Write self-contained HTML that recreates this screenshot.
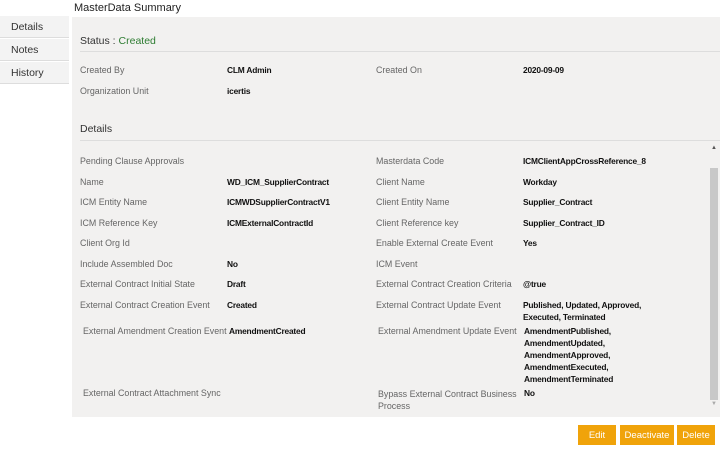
<!DOCTYPE html>
<html><head><style>
body{margin:0;width:720px;height:449px;background:#fff;font-family:"Liberation Sans",sans-serif;position:relative;overflow:hidden}
.a{position:absolute;white-space:nowrap}
.l{font-size:8.9px;color:#666}
.v{font-size:8.4px;color:#111;font-weight:bold;letter-spacing:-0.2px;line-height:12px}
.nav{position:absolute;left:0;width:69px;height:22px;background:#f3f3f3;border-bottom:1px solid #ddd;font-size:10.5px;color:#333;line-height:22px;padding-left:11px;box-sizing:border-box}
.btn{position:absolute;top:425px;height:20px;background:#f0a30a;color:#fff;font-size:9.5px;line-height:22px;text-align:center}
</style></head><body>
<div class="a" style="left:74px;top:2px;font-size:11px;color:#222">MasterData Summary</div>
<div class="nav" style="top:16px">Details</div>
<div class="nav" style="top:39px">Notes</div>
<div class="nav" style="top:62px">History</div>
<div style="position:absolute;left:72px;top:17px;width:648px;height:400px;background:#f2f1f0"></div>
<div class="a" style="left:80px;top:35px;font-size:10.5px;color:#333">Status : <span style="color:#2e7d32">Created</span></div>
<div style="position:absolute;left:80px;top:51px;width:640px;height:1px;background:#ddd"></div>
<div class="a" style="left:80px;font-size:10.5px;color:#333;top:123px">Details</div>
<div style="position:absolute;left:80px;top:140px;width:640px;height:1px;background:#ddd"></div>
<div style="position:absolute;left:710px;top:168px;width:8px;height:232px;background:#c8c8c8"></div>
<div class="a" style="left:711px;top:145px;font-size:6px;color:#555">▲</div>
<div class="a" style="left:711px;top:401px;font-size:6px;color:#aaa">▼</div>

<div class="a l" style="left:80px;top:65px">Created By</div><div class="a v" style="left:227px;top:64px">CLM Admin</div>
<div class="a l" style="left:376px;top:65px">Created On</div><div class="a v" style="left:523px;top:64px">2020-09-09</div>
<div class="a l" style="left:80px;top:86px">Organization Unit</div><div class="a v" style="left:227px;top:85px">icertis</div>

<div class="a l" style="left:80px;top:156px">Pending Clause Approvals</div>
<div class="a l" style="left:376px;top:156px">Masterdata Code</div><div class="a v" style="left:523px;top:155px">ICMClientAppCrossReference_8</div>
<div class="a l" style="left:80px;top:177px">Name</div><div class="a v" style="left:227px;top:176px">WD_ICM_SupplierContract</div>
<div class="a l" style="left:376px;top:177px">Client Name</div><div class="a v" style="left:523px;top:176px">Workday</div>
<div class="a l" style="left:80px;top:197px">ICM Entity Name</div><div class="a v" style="left:227px;top:196px">ICMWDSupplierContractV1</div>
<div class="a l" style="left:376px;top:197px">Client Entity Name</div><div class="a v" style="left:523px;top:196px">Supplier_Contract</div>
<div class="a l" style="left:80px;top:218px">ICM Reference Key</div><div class="a v" style="left:227px;top:217px">ICMExternalContractId</div>
<div class="a l" style="left:376px;top:218px">Client Reference key</div><div class="a v" style="left:523px;top:217px">Supplier_Contract_ID</div>
<div class="a l" style="left:80px;top:238px">Client Org Id</div>
<div class="a l" style="left:376px;top:238px">Enable External Create Event</div><div class="a v" style="left:523px;top:237px">Yes</div>
<div class="a l" style="left:80px;top:259px">Include Assembled Doc</div><div class="a v" style="left:227px;top:258px">No</div>
<div class="a l" style="left:376px;top:259px">ICM Event</div>
<div class="a l" style="left:80px;top:279px">External Contract Initial State</div><div class="a v" style="left:227px;top:278px">Draft</div>
<div class="a l" style="left:376px;top:279px">External Contract Creation Criteria</div><div class="a v" style="left:523px;top:278px">@true</div>
<div class="a l" style="left:80px;top:300px">External Contract Creation Event</div><div class="a v" style="left:227px;top:299px">Created</div>
<div class="a l" style="left:376px;top:300px">External Contract Update Event</div><div class="a v" style="left:523px;top:299px">Published, Updated, Approved,<br>Executed, Terminated</div>
<div class="a l" style="left:83px;top:326px">External Amendment Creation Event</div><div class="a v" style="left:229px;top:325px">AmendmentCreated</div>
<div class="a l" style="left:378px;top:326px">External Amendment Update Event</div><div class="a v" style="left:524px;top:325px">AmendmentPublished,<br>AmendmentUpdated,<br>AmendmentApproved,<br>AmendmentExecuted,<br>AmendmentTerminated</div>
<div class="a l" style="left:83px;top:388px">External Contract Attachment Sync</div>
<div class="a l" style="left:378px;top:388px;line-height:12px">Bypass External Contract Business<br>Process</div><div class="a v" style="left:524px;top:387px">No</div>

<div class="btn" style="left:578px;width:38px">Edit</div>
<div class="btn" style="left:620px;width:54px">Deactivate</div>
<div class="btn" style="left:677px;width:38px">Delete</div>
</body></html>
